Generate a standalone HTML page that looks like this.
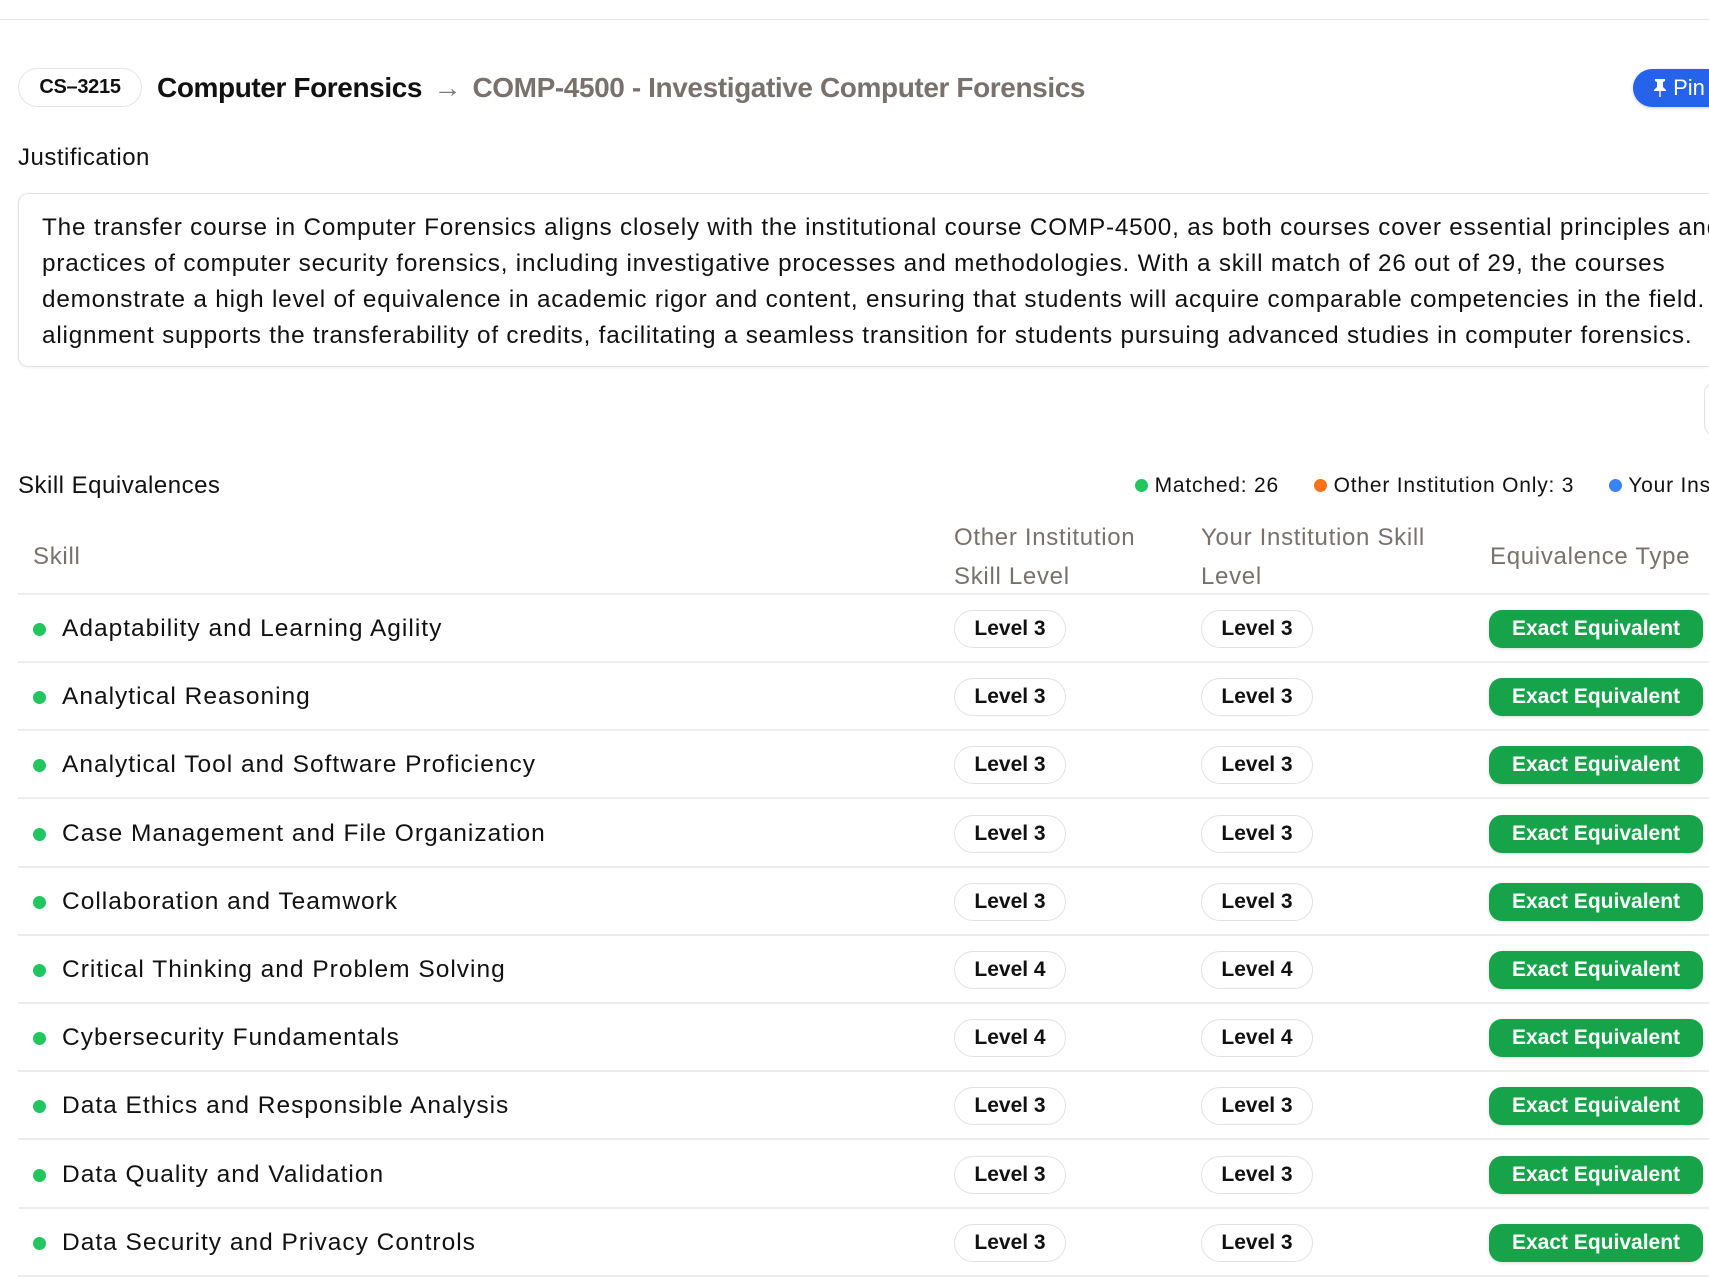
<!DOCTYPE html>
<html><head><meta charset="utf-8"><style>
*{box-sizing:border-box;margin:0;padding:0}
html,body{width:1709px;height:1283px;overflow:hidden}
body{background:#fff;font-family:"Liberation Sans",sans-serif;color:#111;position:relative}
#wrap{position:absolute;left:0;top:0;width:1709px;height:1283px;overflow:hidden}
.abs{position:absolute}
.topline{left:0;top:19px;width:1709px;height:1px;background:#e5e5e5}
.chip{left:18px;top:68px;width:124px;height:39px;border:1px solid #e5e5e5;border-radius:20px;font-weight:bold;font-size:20px;line-height:37px;text-align:center;letter-spacing:-0.3px}
.title{left:157px;top:70px;font-size:28px;line-height:36px;white-space:nowrap;letter-spacing:-0.4px}
.pin{left:1633px;top:69px;width:76px;height:38px;background:#2563eb;border-radius:19px 0 0 19px;color:#fff;font-size:22px;line-height:38px;padding-left:20px;box-shadow:0 1px 3px rgba(0,0,0,.2);white-space:nowrap;overflow:hidden}
.h{font-size:24px;line-height:30px;letter-spacing:0.5px}
.box{left:18px;top:193px;width:1691px;height:174px;border:1px solid #e2e2e2;border-right:none;border-radius:10px 0 0 10px;box-shadow:0 1px 2px rgba(0,0,0,.06);padding:16px 0 0 23px;font-size:24.3px;line-height:36px;white-space:nowrap;letter-spacing:0.8px;overflow:hidden}
.legend{top:474px;font-size:21px;line-height:24px;white-space:nowrap;letter-spacing:0.8px}
.ld{width:13px;height:13px;border-radius:50%;display:inline-block}
.th{color:#78716c;font-size:24px;line-height:39px;letter-spacing:0.7px;white-space:nowrap}
.row{left:18px;width:1691px;height:68px;border-bottom:2px solid #ececec}
.dot{left:15px;top:28px;width:13px;height:13px;border-radius:50%;background:#22c55e}
.name{left:44px;top:18px;font-size:24.5px;line-height:32px;white-space:nowrap;letter-spacing:1px}
.lvl{top:15px;width:112px;height:38px;border:1px solid #e2e2e2;border-radius:19px;font-weight:bold;font-size:21px;line-height:36px;text-align:center}
.eq{left:1471px;top:15px;width:214px;height:38px;background:#16a34a;color:#fff;border-radius:13px;font-weight:bold;font-size:21px;line-height:38px;text-align:center;box-shadow:0 1px 3px rgba(0,0,0,.15)}
</style></head><body><div id="wrap">
<div class="abs topline"></div>
<div class="abs chip">CS–3215</div>
<div class="abs title"><span style="font-weight:bold;color:#111">Computer Forensics</span> <span style="color:#777;margin:0 4px">→</span> <span style="color:#78716c;font-weight:bold">COMP-4500 - Investigative Computer Forensics</span></div>
<div class="abs pin"><svg width="14" height="20" viewBox="0 0 14 20" style="vertical-align:-3px"><path d="M2 1h10v2l-2 1v5l3 3v1H1v-1l3-3V4L2 3z M6.3 13h1.4v6h-1.4z" fill="#fff"/></svg> Pin</div>
<div class="abs h" style="left:18px;top:143px">Justification</div>
<div class="abs box">The transfer course in Computer Forensics aligns closely with the institutional course COMP-4500, as both courses cover essential principles and<br>practices of computer security forensics, including investigative processes and methodologies. With a skill match of 26 out of 29, the courses<br>demonstrate a high level of equivalence in academic rigor and content, ensuring that students will acquire comparable competencies in the field. This<br>alignment supports the transferability of credits, facilitating a seamless transition for students pursuing advanced studies in computer forensics.</div>
<div class="abs" style="left:1704px;top:383px;width:20px;height:52px;border:1px solid #e2e2e2;border-radius:10px"></div>
<div class="abs h" style="left:18px;top:471px">Skill Equivalences</div>
<div class="abs legend" style="left:1135px"><span class="ld" style="background:#22c55e"></span> Matched: 26</div>
<div class="abs legend" style="left:1314px"><span class="ld" style="background:#f97316"></span> Other Institution Only: 3</div>
<div class="abs legend" style="left:1609px"><span class="ld" style="background:#3b82f6"></span> Your Institution Only: 0</div>
<div class="abs th" style="left:33px;top:537px">Skill</div>
<div class="abs th" style="left:954px;top:518px">Other Institution<br>Skill Level</div>
<div class="abs th" style="left:1201px;top:518px">Your Institution Skill<br>Level</div>
<div class="abs th" style="left:1490px;top:537px">Equivalence Type</div>
<div class="abs" style="left:18px;top:593px;width:1691px;height:2px;background:#ececec"></div>
<div id="rows"></div>
</div>
<script>
var d=[["Adaptability and Learning Agility",3],["Analytical Reasoning",3],["Analytical Tool and Software Proficiency",3],["Case Management and File Organization",3],["Collaboration and Teamwork",3],["Critical Thinking and Problem Solving",4],["Cybersecurity Fundamentals",4],["Data Ethics and Responsible Analysis",3],["Data Quality and Validation",3],["Data Security and Privacy Controls",3]];
var h="";d.forEach(function(r,i){var t=595+i*68.2;h+='<div class="abs row" style="top:'+t+'px"><div class="abs dot"></div><div class="abs name">'+r[0]+'</div><div class="abs lvl" style="left:936px">Level '+r[1]+'</div><div class="abs lvl" style="left:1183px">Level '+r[1]+'</div><div class="abs eq">Exact Equivalent</div></div>';});
document.getElementById("rows").innerHTML=h;
</script>
</body></html>
